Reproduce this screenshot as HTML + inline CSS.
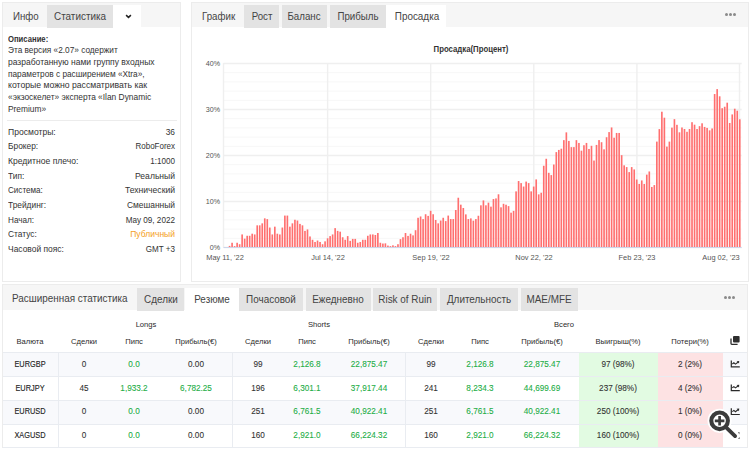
<!DOCTYPE html>
<html><head><meta charset="utf-8"><style>
html,body{margin:0;padding:0;background:#fff;width:750px;height:450px;overflow:hidden;position:relative;font-family:"Liberation Sans", sans-serif;}
body>div,body>svg{position:absolute;}
.t{white-space:nowrap;}
</style></head><body>
<div style="left:2px;top:2px;width:179px;height:280px;border:1px solid #ececec;box-sizing:border-box;background:#fff"></div>
<div style="left:3px;top:3px;width:177px;height:24.4px;background:#f6f6f6"></div>
<div style="left:47px;top:5px;width:66px;height:23px;background:#e3e3e3"></div>
<div style="left:113px;top:5px;width:28px;height:23px;background:#fff"></div>
<div class="t" style="top:11.84px;font-size:10px;line-height:10px;color:#444;left:13px;transform:scaleX(0.97);transform-origin:left 50%;">Инфо</div>
<div class="t" style="top:11.84px;font-size:10px;line-height:10px;color:#444;left:54px;transform:scaleX(0.99);transform-origin:left 50%;">Статистика</div>
<svg style="left:124.5px;top:14.3px" width="7" height="5" viewBox="0 0 7 5"><path d="M1.1 1.1 L3.5 3.4 L5.9 1.1" fill="none" stroke="#222" stroke-width="1.5"/></svg>
<div class="t" style="top:34.55px;font-size:8.8px;line-height:8.8px;color:#333;font-weight:bold;left:8.4px;transform:scaleX(0.874);transform-origin:left 50%;">Описание:</div>
<div class="t" style="top:46.05px;font-size:8.8px;line-height:8.8px;color:#333;left:8.4px;transform:scaleX(0.94);transform-origin:left 50%;">Эта версия «2.07» содержит</div>
<div class="t" style="top:57.85px;font-size:8.8px;line-height:8.8px;color:#333;left:8.4px;transform:scaleX(0.967);transform-origin:left 50%;">разработанную нами группу входных</div>
<div class="t" style="top:69.65px;font-size:8.8px;line-height:8.8px;color:#333;left:8.4px;transform:scaleX(0.94);transform-origin:left 50%;">параметров с расширением «Xtra»,</div>
<div class="t" style="top:81.45px;font-size:8.8px;line-height:8.8px;color:#333;left:8.4px;transform:scaleX(0.985);transform-origin:left 50%;">которые можно рассматривать как</div>
<div class="t" style="top:93.25px;font-size:8.8px;line-height:8.8px;color:#333;left:8.4px;transform:scaleX(0.952);transform-origin:left 50%;">«экзоскелет» эксперта «Ilan Dynamic</div>
<div class="t" style="top:105.05px;font-size:8.8px;line-height:8.8px;color:#333;left:8.4px;transform:scaleX(0.95);transform-origin:left 50%;">Premium»</div>
<div style="left:7px;top:120px;width:170px;height:1px;background:#ececec"></div>
<div class="t" style="top:127.75px;font-size:8.8px;line-height:8.8px;color:#333;left:8.1px;transform:scaleX(0.975);transform-origin:left 50%;">Просмотры:</div>
<div class="t" style="top:127.75px;font-size:8.8px;line-height:8.8px;color:#333;left:-125.20px;width:300px;text-align:right;transform:scaleX(0.95);transform-origin:right 50%;">36</div>
<div class="t" style="top:142.42px;font-size:8.8px;line-height:8.8px;color:#333;left:8.1px;transform:scaleX(0.95);transform-origin:left 50%;">Брокер:</div>
<div class="t" style="top:142.42px;font-size:8.8px;line-height:8.8px;color:#333;left:-125.20px;width:300px;text-align:right;transform:scaleX(0.908);transform-origin:right 50%;">RoboForex</div>
<div class="t" style="top:157.09px;font-size:8.8px;line-height:8.8px;color:#333;left:8.1px;transform:scaleX(0.973);transform-origin:left 50%;">Кредитное плечо:</div>
<div class="t" style="top:157.09px;font-size:8.8px;line-height:8.8px;color:#333;left:-125.20px;width:300px;text-align:right;transform:scaleX(0.92);transform-origin:right 50%;">1:1000</div>
<div class="t" style="top:171.76px;font-size:8.8px;line-height:8.8px;color:#333;left:8.1px;transform:scaleX(0.95);transform-origin:left 50%;">Тип:</div>
<div class="t" style="top:171.76px;font-size:8.8px;line-height:8.8px;color:#333;left:-125.20px;width:300px;text-align:right;transform:scaleX(0.973);transform-origin:right 50%;">Реальный</div>
<div class="t" style="top:186.43px;font-size:8.8px;line-height:8.8px;color:#333;left:8.1px;transform:scaleX(0.92);transform-origin:left 50%;">Система:</div>
<div class="t" style="top:186.43px;font-size:8.8px;line-height:8.8px;color:#333;left:-125.20px;width:300px;text-align:right;transform:scaleX(0.976);transform-origin:right 50%;">Технический</div>
<div class="t" style="top:201.10px;font-size:8.8px;line-height:8.8px;color:#333;left:8.1px;transform:scaleX(0.95);transform-origin:left 50%;">Трейдинг:</div>
<div class="t" style="top:201.10px;font-size:8.8px;line-height:8.8px;color:#333;left:-125.20px;width:300px;text-align:right;transform:scaleX(0.957);transform-origin:right 50%;">Смешанный</div>
<div class="t" style="top:215.77px;font-size:8.8px;line-height:8.8px;color:#333;left:8.1px;transform:scaleX(0.93);transform-origin:left 50%;">Начал:</div>
<div class="t" style="top:215.77px;font-size:8.8px;line-height:8.8px;color:#333;left:-125.20px;width:300px;text-align:right;transform:scaleX(0.926);transform-origin:right 50%;">May 09, 2022</div>
<div class="t" style="top:230.44px;font-size:8.8px;line-height:8.8px;color:#333;left:8.1px;transform:scaleX(0.95);transform-origin:left 50%;">Статус:</div>
<div class="t" style="top:230.44px;font-size:8.8px;line-height:8.8px;color:#f4a01c;left:-125.20px;width:300px;text-align:right;transform:scaleX(0.969);transform-origin:right 50%;">Публичный</div>
<div class="t" style="top:245.11px;font-size:8.8px;line-height:8.8px;color:#333;left:8.1px;transform:scaleX(0.96);transform-origin:left 50%;">Часовой пояс:</div>
<div class="t" style="top:245.11px;font-size:8.8px;line-height:8.8px;color:#333;left:-125.20px;width:300px;text-align:right;transform:scaleX(0.92);transform-origin:right 50%;">GMT +3</div>
<div style="left:191px;top:2px;width:558px;height:280px;border:1px solid #ececec;box-sizing:border-box;background:#fff"></div>
<div style="left:192px;top:3px;width:556px;height:24.4px;background:#f6f6f6"></div>
<div class="t" style="top:11.84px;font-size:10px;line-height:10px;color:#444;left:202px;transform:scaleX(0.97);transform-origin:left 50%;">График</div>
<div style="left:244px;top:5px;width:35px;height:23px;background:#e3e3e3"></div>
<div class="t" style="top:11.84px;font-size:10px;line-height:10px;color:#444;left:111.50px;width:300px;text-align:center;transform:scaleX(0.97);transform-origin:center 50%;">Рост</div>
<div style="left:281.5px;top:5px;width:45.1px;height:23px;background:#e3e3e3"></div>
<div class="t" style="top:11.84px;font-size:10px;line-height:10px;color:#444;left:154.05px;width:300px;text-align:center;transform:scaleX(0.97);transform-origin:center 50%;">Баланс</div>
<div style="left:329.7px;top:5px;width:56.3px;height:23px;background:#e3e3e3"></div>
<div class="t" style="top:11.84px;font-size:10px;line-height:10px;color:#444;left:207.85px;width:300px;text-align:center;transform:scaleX(0.97);transform-origin:center 50%;">Прибыль</div>
<div style="left:386px;top:5px;width:60px;height:23px;background:#fff"></div>
<div class="t" style="top:11.84px;font-size:10px;line-height:10px;color:#444;left:266.50px;width:300px;text-align:center;transform:scaleX(0.99);transform-origin:center 50%;">Просадка</div>
<div style="left:725.0px;top:13.2px;width:3px;height:3px;border-radius:50%;background:#8a8a8a"></div>
<div style="left:729.0px;top:13.2px;width:3px;height:3px;border-radius:50%;background:#8a8a8a"></div>
<div style="left:733.0px;top:13.2px;width:3px;height:3px;border-radius:50%;background:#8a8a8a"></div>
<svg style="left:0;top:0" width="750" height="450" viewBox="0 0 750 450"><line x1="223.5" y1="247.5" x2="741.7" y2="247.5" stroke="#efefef" stroke-width="1.3"/><line x1="223.5" y1="238.3" x2="741.7" y2="238.3" stroke="#f7f7f7" stroke-width="1"/><line x1="223.5" y1="229.1" x2="741.7" y2="229.1" stroke="#f7f7f7" stroke-width="1"/><line x1="223.5" y1="219.9" x2="741.7" y2="219.9" stroke="#f7f7f7" stroke-width="1"/><line x1="223.5" y1="210.7" x2="741.7" y2="210.7" stroke="#f7f7f7" stroke-width="1"/><line x1="223.5" y1="201.5" x2="741.7" y2="201.5" stroke="#efefef" stroke-width="1.3"/><line x1="223.5" y1="192.3" x2="741.7" y2="192.3" stroke="#f7f7f7" stroke-width="1"/><line x1="223.5" y1="183.1" x2="741.7" y2="183.1" stroke="#f7f7f7" stroke-width="1"/><line x1="223.5" y1="173.9" x2="741.7" y2="173.9" stroke="#f7f7f7" stroke-width="1"/><line x1="223.5" y1="164.7" x2="741.7" y2="164.7" stroke="#f7f7f7" stroke-width="1"/><line x1="223.5" y1="155.5" x2="741.7" y2="155.5" stroke="#efefef" stroke-width="1.3"/><line x1="223.5" y1="146.3" x2="741.7" y2="146.3" stroke="#f7f7f7" stroke-width="1"/><line x1="223.5" y1="137.1" x2="741.7" y2="137.1" stroke="#f7f7f7" stroke-width="1"/><line x1="223.5" y1="127.9" x2="741.7" y2="127.9" stroke="#f7f7f7" stroke-width="1"/><line x1="223.5" y1="118.69999999999999" x2="741.7" y2="118.69999999999999" stroke="#f7f7f7" stroke-width="1"/><line x1="223.5" y1="109.5" x2="741.7" y2="109.5" stroke="#efefef" stroke-width="1.3"/><line x1="223.5" y1="100.30000000000001" x2="741.7" y2="100.30000000000001" stroke="#f7f7f7" stroke-width="1"/><line x1="223.5" y1="91.1" x2="741.7" y2="91.1" stroke="#f7f7f7" stroke-width="1"/><line x1="223.5" y1="81.9" x2="741.7" y2="81.9" stroke="#f7f7f7" stroke-width="1"/><line x1="223.5" y1="72.69999999999999" x2="741.7" y2="72.69999999999999" stroke="#f7f7f7" stroke-width="1"/><line x1="223.5" y1="63.5" x2="741.7" y2="63.5" stroke="#efefef" stroke-width="1.3"/><line x1="223.5" y1="63" x2="223.5" y2="247.5" stroke="#efefef" stroke-width="1.4"/><line x1="327.6" y1="63" x2="327.6" y2="247.5" stroke="#efefef" stroke-width="1.4"/><line x1="430.7" y1="63" x2="430.7" y2="247.5" stroke="#efefef" stroke-width="1.4"/><line x1="533.8" y1="63" x2="533.8" y2="247.5" stroke="#efefef" stroke-width="1.4"/><line x1="636.9" y1="63" x2="636.9" y2="247.5" stroke="#efefef" stroke-width="1.4"/><line x1="739.5" y1="63" x2="739.5" y2="247.5" stroke="#efefef" stroke-width="1.4"/><rect x="228.76" y="245.89" width="1.64" height="1.61" fill="#ff6f6f"/><rect x="231.27" y="242.76" width="1.64" height="4.74" fill="#ff6f6f"/><rect x="233.78" y="246.12" width="1.64" height="1.38" fill="#ff6f6f"/><rect x="236.30" y="242.76" width="1.64" height="4.74" fill="#ff6f6f"/><rect x="238.81" y="244.23" width="1.64" height="3.27" fill="#ff6f6f"/><rect x="241.32" y="234.44" width="1.64" height="13.06" fill="#ff6f6f"/><rect x="243.84" y="238.67" width="1.64" height="8.83" fill="#ff6f6f"/><rect x="246.35" y="235.77" width="1.64" height="11.73" fill="#ff6f6f"/><rect x="248.86" y="235.77" width="1.64" height="11.73" fill="#ff6f6f"/><rect x="251.38" y="233.70" width="1.64" height="13.80" fill="#ff6f6f"/><rect x="253.89" y="234.44" width="1.64" height="13.06" fill="#ff6f6f"/><rect x="256.40" y="225.33" width="1.64" height="22.17" fill="#ff6f6f"/><rect x="258.92" y="225.33" width="1.64" height="22.17" fill="#ff6f6f"/><rect x="261.43" y="223.35" width="1.64" height="24.15" fill="#ff6f6f"/><rect x="263.94" y="218.34" width="1.64" height="29.16" fill="#ff6f6f"/><rect x="266.46" y="219.12" width="1.64" height="28.38" fill="#ff6f6f"/><rect x="268.97" y="227.54" width="1.64" height="19.96" fill="#ff6f6f"/><rect x="271.48" y="234.44" width="1.64" height="13.06" fill="#ff6f6f"/><rect x="274.00" y="226.66" width="1.64" height="20.84" fill="#ff6f6f"/><rect x="276.51" y="233.70" width="1.64" height="13.80" fill="#ff6f6f"/><rect x="279.02" y="234.44" width="1.64" height="13.06" fill="#ff6f6f"/><rect x="281.54" y="227.54" width="1.64" height="19.96" fill="#ff6f6f"/><rect x="284.05" y="215.58" width="1.64" height="31.92" fill="#ff6f6f"/><rect x="286.56" y="215.58" width="1.64" height="31.92" fill="#ff6f6f"/><rect x="289.08" y="226.66" width="1.64" height="20.84" fill="#ff6f6f"/><rect x="291.59" y="223.35" width="1.64" height="24.15" fill="#ff6f6f"/><rect x="294.10" y="219.76" width="1.64" height="27.74" fill="#ff6f6f"/><rect x="296.62" y="220.54" width="1.64" height="26.96" fill="#ff6f6f"/><rect x="299.13" y="223.90" width="1.64" height="23.60" fill="#ff6f6f"/><rect x="301.64" y="225.33" width="1.64" height="22.17" fill="#ff6f6f"/><rect x="304.16" y="230.89" width="1.64" height="16.61" fill="#ff6f6f"/><rect x="306.67" y="229.42" width="1.64" height="18.08" fill="#ff6f6f"/><rect x="309.18" y="236.46" width="1.64" height="11.04" fill="#ff6f6f"/><rect x="311.70" y="239.77" width="1.64" height="7.73" fill="#ff6f6f"/><rect x="314.21" y="241.98" width="1.64" height="5.52" fill="#ff6f6f"/><rect x="316.72" y="240.55" width="1.64" height="6.95" fill="#ff6f6f"/><rect x="319.24" y="241.98" width="1.64" height="5.52" fill="#ff6f6f"/><rect x="321.75" y="244.23" width="1.64" height="3.27" fill="#ff6f6f"/><rect x="324.26" y="241.34" width="1.64" height="6.16" fill="#ff6f6f"/><rect x="326.78" y="238.30" width="1.64" height="9.20" fill="#ff6f6f"/><rect x="329.29" y="236.09" width="1.64" height="11.41" fill="#ff6f6f"/><rect x="331.80" y="234.44" width="1.64" height="13.06" fill="#ff6f6f"/><rect x="334.32" y="228.13" width="1.64" height="19.37" fill="#ff6f6f"/><rect x="336.83" y="230.89" width="1.64" height="16.61" fill="#ff6f6f"/><rect x="339.34" y="231.68" width="1.64" height="15.82" fill="#ff6f6f"/><rect x="341.86" y="237.24" width="1.64" height="10.26" fill="#ff6f6f"/><rect x="344.37" y="239.77" width="1.64" height="7.73" fill="#ff6f6f"/><rect x="346.88" y="236.09" width="1.64" height="11.41" fill="#ff6f6f"/><rect x="349.40" y="240.88" width="1.64" height="6.62" fill="#ff6f6f"/><rect x="351.91" y="238.90" width="1.64" height="8.60" fill="#ff6f6f"/><rect x="354.42" y="238.90" width="1.64" height="8.60" fill="#ff6f6f"/><rect x="356.93" y="242.76" width="1.64" height="4.74" fill="#ff6f6f"/><rect x="359.45" y="241.98" width="1.64" height="5.52" fill="#ff6f6f"/><rect x="361.96" y="239.77" width="1.64" height="7.73" fill="#ff6f6f"/><rect x="364.47" y="239.77" width="1.64" height="7.73" fill="#ff6f6f"/><rect x="366.99" y="235.77" width="1.64" height="11.73" fill="#ff6f6f"/><rect x="369.50" y="234.44" width="1.64" height="13.06" fill="#ff6f6f"/><rect x="372.01" y="234.44" width="1.64" height="13.06" fill="#ff6f6f"/><rect x="374.53" y="234.99" width="1.64" height="12.51" fill="#ff6f6f"/><rect x="377.04" y="233.01" width="1.64" height="14.49" fill="#ff6f6f"/><rect x="379.55" y="242.76" width="1.64" height="4.74" fill="#ff6f6f"/><rect x="382.07" y="243.54" width="1.64" height="3.96" fill="#ff6f6f"/><rect x="384.58" y="243.36" width="1.64" height="4.14" fill="#ff6f6f"/><rect x="387.09" y="245.57" width="1.64" height="1.93" fill="#ff6f6f"/><rect x="389.61" y="246.12" width="1.64" height="1.38" fill="#ff6f6f"/><rect x="392.12" y="245.34" width="1.64" height="2.16" fill="#ff6f6f"/><rect x="394.63" y="246.12" width="1.64" height="1.38" fill="#ff6f6f"/><rect x="397.15" y="244.23" width="1.64" height="3.27" fill="#ff6f6f"/><rect x="399.66" y="239.13" width="1.64" height="8.37" fill="#ff6f6f"/><rect x="402.17" y="237.24" width="1.64" height="10.26" fill="#ff6f6f"/><rect x="404.69" y="233.01" width="1.64" height="14.49" fill="#ff6f6f"/><rect x="407.20" y="235.91" width="1.64" height="11.59" fill="#ff6f6f"/><rect x="409.71" y="233.70" width="1.64" height="13.80" fill="#ff6f6f"/><rect x="412.23" y="235.36" width="1.64" height="12.14" fill="#ff6f6f"/><rect x="414.74" y="230.20" width="1.64" height="17.30" fill="#ff6f6f"/><rect x="417.25" y="217.78" width="1.64" height="29.72" fill="#ff6f6f"/><rect x="419.77" y="216.45" width="1.64" height="31.05" fill="#ff6f6f"/><rect x="422.28" y="219.12" width="1.64" height="28.38" fill="#ff6f6f"/><rect x="424.79" y="214.24" width="1.64" height="33.26" fill="#ff6f6f"/><rect x="427.31" y="215.90" width="1.64" height="31.60" fill="#ff6f6f"/><rect x="429.82" y="210.79" width="1.64" height="36.71" fill="#ff6f6f"/><rect x="432.33" y="214.24" width="1.64" height="33.26" fill="#ff6f6f"/><rect x="434.85" y="219.99" width="1.64" height="27.51" fill="#ff6f6f"/><rect x="437.36" y="223.35" width="1.64" height="24.15" fill="#ff6f6f"/><rect x="439.87" y="220.54" width="1.64" height="26.96" fill="#ff6f6f"/><rect x="442.39" y="217.78" width="1.64" height="29.72" fill="#ff6f6f"/><rect x="444.90" y="221.10" width="1.64" height="26.40" fill="#ff6f6f"/><rect x="447.41" y="215.58" width="1.64" height="31.92" fill="#ff6f6f"/><rect x="449.93" y="219.07" width="1.64" height="28.43" fill="#ff6f6f"/><rect x="452.44" y="219.07" width="1.64" height="28.43" fill="#ff6f6f"/><rect x="454.95" y="210.01" width="1.64" height="37.49" fill="#ff6f6f"/><rect x="457.47" y="197.73" width="1.64" height="49.77" fill="#ff6f6f"/><rect x="459.98" y="204.67" width="1.64" height="42.83" fill="#ff6f6f"/><rect x="462.49" y="207.99" width="1.64" height="39.51" fill="#ff6f6f"/><rect x="465.01" y="214.38" width="1.64" height="33.12" fill="#ff6f6f"/><rect x="467.52" y="219.07" width="1.64" height="28.43" fill="#ff6f6f"/><rect x="470.03" y="218.38" width="1.64" height="29.12" fill="#ff6f6f"/><rect x="472.55" y="220.68" width="1.64" height="26.82" fill="#ff6f6f"/><rect x="475.06" y="219.07" width="1.64" height="28.43" fill="#ff6f6f"/><rect x="477.57" y="215.76" width="1.64" height="31.74" fill="#ff6f6f"/><rect x="480.09" y="205.32" width="1.64" height="42.18" fill="#ff6f6f"/><rect x="482.60" y="200.40" width="1.64" height="47.10" fill="#ff6f6f"/><rect x="485.11" y="205.32" width="1.64" height="42.18" fill="#ff6f6f"/><rect x="487.63" y="202.65" width="1.64" height="44.85" fill="#ff6f6f"/><rect x="490.14" y="206.65" width="1.64" height="40.85" fill="#ff6f6f"/><rect x="492.65" y="199.06" width="1.64" height="48.44" fill="#ff6f6f"/><rect x="495.17" y="198.42" width="1.64" height="49.08" fill="#ff6f6f"/><rect x="497.68" y="194.28" width="1.64" height="53.22" fill="#ff6f6f"/><rect x="500.19" y="207.34" width="1.64" height="40.16" fill="#ff6f6f"/><rect x="502.71" y="203.80" width="1.64" height="43.70" fill="#ff6f6f"/><rect x="505.22" y="204.72" width="1.64" height="42.78" fill="#ff6f6f"/><rect x="507.73" y="206.10" width="1.64" height="41.40" fill="#ff6f6f"/><rect x="510.25" y="212.68" width="1.64" height="34.82" fill="#ff6f6f"/><rect x="512.76" y="210.88" width="1.64" height="36.62" fill="#ff6f6f"/><rect x="515.27" y="191.38" width="1.64" height="56.12" fill="#ff6f6f"/><rect x="517.79" y="181.03" width="1.64" height="66.47" fill="#ff6f6f"/><rect x="520.30" y="183.10" width="1.64" height="64.40" fill="#ff6f6f"/><rect x="522.81" y="186.55" width="1.64" height="60.95" fill="#ff6f6f"/><rect x="525.33" y="181.58" width="1.64" height="65.92" fill="#ff6f6f"/><rect x="527.84" y="183.10" width="1.64" height="64.40" fill="#ff6f6f"/><rect x="530.35" y="191.38" width="1.64" height="56.12" fill="#ff6f6f"/><rect x="532.87" y="186.55" width="1.64" height="60.95" fill="#ff6f6f"/><rect x="535.38" y="179.42" width="1.64" height="68.08" fill="#ff6f6f"/><rect x="537.89" y="194.37" width="1.64" height="53.13" fill="#ff6f6f"/><rect x="540.41" y="192.76" width="1.64" height="54.74" fill="#ff6f6f"/><rect x="542.92" y="165.76" width="1.64" height="81.74" fill="#ff6f6f"/><rect x="545.43" y="158.77" width="1.64" height="88.73" fill="#ff6f6f"/><rect x="547.95" y="172.80" width="1.64" height="74.70" fill="#ff6f6f"/><rect x="550.46" y="175.10" width="1.64" height="72.40" fill="#ff6f6f"/><rect x="552.97" y="164.52" width="1.64" height="82.98" fill="#ff6f6f"/><rect x="555.49" y="152.10" width="1.64" height="95.40" fill="#ff6f6f"/><rect x="558.00" y="149.93" width="1.64" height="97.57" fill="#ff6f6f"/><rect x="560.51" y="148.69" width="1.64" height="98.81" fill="#ff6f6f"/><rect x="563.03" y="140.14" width="1.64" height="107.36" fill="#ff6f6f"/><rect x="565.54" y="132.36" width="1.64" height="115.14" fill="#ff6f6f"/><rect x="568.05" y="140.92" width="1.64" height="106.58" fill="#ff6f6f"/><rect x="570.57" y="147.13" width="1.64" height="100.37" fill="#ff6f6f"/><rect x="573.08" y="147.13" width="1.64" height="100.37" fill="#ff6f6f"/><rect x="575.59" y="140.14" width="1.64" height="107.36" fill="#ff6f6f"/><rect x="578.11" y="142.94" width="1.64" height="104.56" fill="#ff6f6f"/><rect x="580.62" y="150.67" width="1.64" height="96.83" fill="#ff6f6f"/><rect x="583.13" y="145.24" width="1.64" height="102.26" fill="#ff6f6f"/><rect x="585.65" y="142.94" width="1.64" height="104.56" fill="#ff6f6f"/><rect x="588.16" y="148.97" width="1.64" height="98.53" fill="#ff6f6f"/><rect x="590.67" y="145.79" width="1.64" height="101.71" fill="#ff6f6f"/><rect x="593.19" y="160.56" width="1.64" height="86.94" fill="#ff6f6f"/><rect x="595.70" y="144.92" width="1.64" height="102.58" fill="#ff6f6f"/><rect x="598.21" y="140.09" width="1.64" height="107.41" fill="#ff6f6f"/><rect x="600.73" y="142.21" width="1.64" height="105.29" fill="#ff6f6f"/><rect x="603.24" y="149.34" width="1.64" height="98.16" fill="#ff6f6f"/><rect x="605.75" y="137.24" width="1.64" height="110.26" fill="#ff6f6f"/><rect x="608.26" y="132.09" width="1.64" height="115.41" fill="#ff6f6f"/><rect x="610.78" y="127.44" width="1.64" height="120.06" fill="#ff6f6f"/><rect x="613.29" y="137.74" width="1.64" height="109.76" fill="#ff6f6f"/><rect x="615.80" y="132.96" width="1.64" height="114.54" fill="#ff6f6f"/><rect x="618.32" y="132.96" width="1.64" height="114.54" fill="#ff6f6f"/><rect x="620.83" y="155.18" width="1.64" height="92.32" fill="#ff6f6f"/><rect x="623.34" y="165.34" width="1.64" height="82.16" fill="#ff6f6f"/><rect x="625.86" y="167.09" width="1.64" height="80.41" fill="#ff6f6f"/><rect x="628.37" y="172.11" width="1.64" height="75.39" fill="#ff6f6f"/><rect x="630.88" y="167.09" width="1.64" height="80.41" fill="#ff6f6f"/><rect x="633.40" y="169.44" width="1.64" height="78.06" fill="#ff6f6f"/><rect x="635.91" y="179.51" width="1.64" height="67.99" fill="#ff6f6f"/><rect x="638.42" y="183.97" width="1.64" height="63.53" fill="#ff6f6f"/><rect x="640.94" y="180.43" width="1.64" height="67.07" fill="#ff6f6f"/><rect x="643.45" y="183.97" width="1.64" height="63.53" fill="#ff6f6f"/><rect x="645.96" y="174.64" width="1.64" height="72.86" fill="#ff6f6f"/><rect x="648.48" y="171.46" width="1.64" height="76.04" fill="#ff6f6f"/><rect x="650.99" y="186.96" width="1.64" height="60.54" fill="#ff6f6f"/><rect x="653.50" y="185.08" width="1.64" height="62.42" fill="#ff6f6f"/><rect x="656.02" y="141.61" width="1.64" height="105.89" fill="#ff6f6f"/><rect x="658.53" y="129.10" width="1.64" height="118.40" fill="#ff6f6f"/><rect x="661.04" y="111.71" width="1.64" height="135.79" fill="#ff6f6f"/><rect x="663.56" y="117.69" width="1.64" height="129.81" fill="#ff6f6f"/><rect x="666.07" y="146.62" width="1.64" height="100.88" fill="#ff6f6f"/><rect x="668.58" y="141.61" width="1.64" height="105.89" fill="#ff6f6f"/><rect x="671.10" y="127.62" width="1.64" height="119.88" fill="#ff6f6f"/><rect x="673.61" y="119.16" width="1.64" height="128.34" fill="#ff6f6f"/><rect x="676.12" y="124.82" width="1.64" height="122.68" fill="#ff6f6f"/><rect x="678.64" y="132.32" width="1.64" height="115.18" fill="#ff6f6f"/><rect x="681.15" y="127.49" width="1.64" height="120.01" fill="#ff6f6f"/><rect x="683.66" y="129.00" width="1.64" height="118.50" fill="#ff6f6f"/><rect x="686.18" y="131.81" width="1.64" height="115.69" fill="#ff6f6f"/><rect x="688.69" y="129.00" width="1.64" height="118.50" fill="#ff6f6f"/><rect x="691.20" y="122.20" width="1.64" height="125.30" fill="#ff6f6f"/><rect x="693.72" y="124.68" width="1.64" height="122.82" fill="#ff6f6f"/><rect x="696.23" y="129.00" width="1.64" height="118.50" fill="#ff6f6f"/><rect x="698.74" y="126.15" width="1.64" height="121.35" fill="#ff6f6f"/><rect x="701.26" y="123.30" width="1.64" height="124.20" fill="#ff6f6f"/><rect x="703.77" y="126.93" width="1.64" height="120.57" fill="#ff6f6f"/><rect x="706.28" y="127.90" width="1.64" height="119.60" fill="#ff6f6f"/><rect x="708.80" y="130.34" width="1.64" height="117.16" fill="#ff6f6f"/><rect x="711.31" y="128.45" width="1.64" height="119.05" fill="#ff6f6f"/><rect x="713.82" y="94.04" width="1.64" height="153.46" fill="#ff6f6f"/><rect x="716.34" y="89.12" width="1.64" height="158.38" fill="#ff6f6f"/><rect x="718.85" y="96.30" width="1.64" height="151.20" fill="#ff6f6f"/><rect x="721.36" y="108.21" width="1.64" height="139.29" fill="#ff6f6f"/><rect x="723.88" y="106.74" width="1.64" height="140.76" fill="#ff6f6f"/><rect x="726.39" y="102.69" width="1.64" height="144.81" fill="#ff6f6f"/><rect x="728.90" y="122.98" width="1.64" height="124.52" fill="#ff6f6f"/><rect x="731.42" y="114.42" width="1.64" height="133.08" fill="#ff6f6f"/><rect x="733.93" y="108.72" width="1.64" height="138.78" fill="#ff6f6f"/><rect x="736.44" y="110.70" width="1.64" height="136.80" fill="#ff6f6f"/><rect x="738.96" y="119.30" width="1.64" height="128.20" fill="#ff6f6f"/><line x1="223.5" y1="247.5" x2="741.7" y2="247.5" stroke="#ccd6eb" stroke-width="1"/></svg>
<div class="t" style="top:44.69px;font-size:8.4px;line-height:8.4px;color:#333;font-weight:bold;left:320.50px;width:300px;text-align:center;transform:scaleX(0.93);transform-origin:center 50%;">Просадка(Процент)</div>
<div class="t" style="top:243.78px;font-size:7.7px;line-height:7.7px;color:#555;left:-80.00px;width:300px;text-align:right;transform:scaleX(0.93);transform-origin:right 50%;">0%</div>
<div class="t" style="top:197.78px;font-size:7.7px;line-height:7.7px;color:#555;left:-80.00px;width:300px;text-align:right;transform:scaleX(0.93);transform-origin:right 50%;">10%</div>
<div class="t" style="top:151.78px;font-size:7.7px;line-height:7.7px;color:#555;left:-80.00px;width:300px;text-align:right;transform:scaleX(0.93);transform-origin:right 50%;">20%</div>
<div class="t" style="top:105.78px;font-size:7.7px;line-height:7.7px;color:#555;left:-80.00px;width:300px;text-align:right;transform:scaleX(0.93);transform-origin:right 50%;">30%</div>
<div class="t" style="top:59.78px;font-size:7.7px;line-height:7.7px;color:#555;left:-80.00px;width:300px;text-align:right;transform:scaleX(0.93);transform-origin:right 50%;">40%</div>
<div class="t" style="top:254.41px;font-size:7.9px;line-height:7.9px;color:#555;left:75.00px;width:300px;text-align:center;transform:scaleX(0.94);transform-origin:center 50%;">May 11, &#39;22</div>
<div class="t" style="top:254.41px;font-size:7.9px;line-height:7.9px;color:#555;left:177.70px;width:300px;text-align:center;transform:scaleX(0.94);transform-origin:center 50%;">Jul 14, &#39;22</div>
<div class="t" style="top:254.41px;font-size:7.9px;line-height:7.9px;color:#555;left:281.00px;width:300px;text-align:center;transform:scaleX(0.94);transform-origin:center 50%;">Sep 19, &#39;22</div>
<div class="t" style="top:254.41px;font-size:7.9px;line-height:7.9px;color:#555;left:383.70px;width:300px;text-align:center;transform:scaleX(0.94);transform-origin:center 50%;">Nov 22, &#39;22</div>
<div class="t" style="top:254.41px;font-size:7.9px;line-height:7.9px;color:#555;left:486.70px;width:300px;text-align:center;transform:scaleX(0.94);transform-origin:center 50%;">Feb 23, &#39;23</div>
<div class="t" style="top:254.41px;font-size:7.9px;line-height:7.9px;color:#555;left:571.30px;width:300px;text-align:center;transform:scaleX(0.94);transform-origin:center 50%;">Aug 02, &#39;23</div>
<div style="left:2px;top:284px;width:746px;height:164px;border:1px solid #ececec;box-sizing:border-box;background:#fff"></div>
<div style="left:3px;top:285px;width:744px;height:25px;background:#f6f6f6"></div>
<div class="t" style="top:294.44px;font-size:10px;line-height:10px;color:#444;left:12px;transform:scaleX(0.99);transform-origin:left 50%;">Расширенная статистика</div>
<div style="left:137px;top:288px;width:47.4px;height:22.7px;background:#e3e3e3"></div>
<div class="t" style="top:294.74px;font-size:10px;line-height:10px;color:#444;left:10.70px;width:300px;text-align:center;transform:scaleX(0.99);transform-origin:center 50%;">Сделки</div>
<div style="left:185.2px;top:288px;width:53.6px;height:22.7px;background:#fff"></div>
<div class="t" style="top:294.74px;font-size:10px;line-height:10px;color:#444;left:62.00px;width:300px;text-align:center;transform:scaleX(0.99);transform-origin:center 50%;">Резюме</div>
<div style="left:239px;top:288px;width:63.8px;height:22.7px;background:#e3e3e3"></div>
<div class="t" style="top:294.74px;font-size:10px;line-height:10px;color:#444;left:120.90px;width:300px;text-align:center;transform:scaleX(0.99);transform-origin:center 50%;">Почасовой</div>
<div style="left:305.5px;top:288px;width:65.0px;height:22.7px;background:#e3e3e3"></div>
<div class="t" style="top:294.74px;font-size:10px;line-height:10px;color:#444;left:188.00px;width:300px;text-align:center;transform:scaleX(0.99);transform-origin:center 50%;">Ежедневно</div>
<div style="left:372.7px;top:288px;width:64.5px;height:22.7px;background:#e3e3e3"></div>
<div class="t" style="top:294.74px;font-size:10px;line-height:10px;color:#444;left:254.95px;width:300px;text-align:center;transform:scaleX(0.99);transform-origin:center 50%;">Risk of Ruin</div>
<div style="left:439.6px;top:288px;width:78.7px;height:22.7px;background:#e3e3e3"></div>
<div class="t" style="top:294.74px;font-size:10px;line-height:10px;color:#444;left:328.95px;width:300px;text-align:center;transform:scaleX(0.99);transform-origin:center 50%;">Длительность</div>
<div style="left:520.7px;top:288px;width:57.3px;height:22.7px;background:#e3e3e3"></div>
<div class="t" style="top:294.74px;font-size:10px;line-height:10px;color:#444;left:399.35px;width:300px;text-align:center;transform:scaleX(0.99);transform-origin:center 50%;">MAE/MFE</div>
<div style="left:724.4px;top:295.8px;width:3px;height:3px;border-radius:50%;background:#8a8a8a"></div>
<div style="left:728.4px;top:295.8px;width:3px;height:3px;border-radius:50%;background:#8a8a8a"></div>
<div style="left:732.4px;top:295.8px;width:3px;height:3px;border-radius:50%;background:#8a8a8a"></div>
<div style="left:3px;top:352px;width:744px;height:95px;"></div>
<div style="left:3px;top:352px;width:744px;height:24px;background:#f8f9fc"></div>
<div style="left:3px;top:400px;width:744px;height:23.5px;background:#f8f9fc"></div>
<div style="left:578.7px;top:352px;width:79.3px;height:95px;background:#e2fbe2"></div>
<div style="left:658px;top:352px;width:65px;height:95px;background:#fde2e3"></div>
<div style="left:3px;top:352px;width:744px;height:1px;background:#e9ecf1"></div>
<div style="left:3px;top:376px;width:744px;height:1px;background:#e9ecf1"></div>
<div style="left:3px;top:400px;width:744px;height:1px;background:#e9ecf1"></div>
<div style="left:3px;top:423.5px;width:744px;height:1px;background:#e9ecf1"></div>
<div style="left:3px;top:447px;width:744px;height:1px;background:#e9ecf1"></div>
<div style="left:58px;top:352px;width:1px;height:95px;background:#e9ecf1"></div>
<div style="left:232px;top:352px;width:1px;height:95px;background:#e9ecf1"></div>
<div style="left:405px;top:352px;width:1px;height:95px;background:#e9ecf1"></div>
<div class="t" style="top:321.14px;font-size:8.1px;line-height:8.1px;color:#2a2a2a;left:-4.20px;width:300px;text-align:center;transform:scaleX(0.94);transform-origin:center 50%;">Longs</div>
<div class="t" style="top:321.14px;font-size:8.1px;line-height:8.1px;color:#2a2a2a;left:169.00px;width:300px;text-align:center;transform:scaleX(0.94);transform-origin:center 50%;">Shorts</div>
<div class="t" style="top:321.14px;font-size:8.1px;line-height:8.1px;color:#2a2a2a;left:414.20px;width:300px;text-align:center;transform:scaleX(0.94);transform-origin:center 50%;">Всего</div>
<div class="t" style="top:338.14px;font-size:8.1px;line-height:8.1px;color:#2a2a2a;left:-119.60px;width:300px;text-align:center;transform:scaleX(0.94);transform-origin:center 50%;">Валюта</div>
<div class="t" style="top:338.14px;font-size:8.1px;line-height:8.1px;color:#2a2a2a;left:-65.80px;width:300px;text-align:center;transform:scaleX(0.94);transform-origin:center 50%;">Сделки</div>
<div class="t" style="top:338.14px;font-size:8.1px;line-height:8.1px;color:#2a2a2a;left:-16.00px;width:300px;text-align:center;transform:scaleX(0.94);transform-origin:center 50%;">Пипс</div>
<div class="t" style="top:338.14px;font-size:8.1px;line-height:8.1px;color:#2a2a2a;left:45.60px;width:300px;text-align:center;transform:scaleX(0.94);transform-origin:center 50%;">Прибыль(€)</div>
<div class="t" style="top:338.14px;font-size:8.1px;line-height:8.1px;color:#2a2a2a;left:107.70px;width:300px;text-align:center;transform:scaleX(0.94);transform-origin:center 50%;">Сделки</div>
<div class="t" style="top:338.14px;font-size:8.1px;line-height:8.1px;color:#2a2a2a;left:157.40px;width:300px;text-align:center;transform:scaleX(0.94);transform-origin:center 50%;">Пипс</div>
<div class="t" style="top:338.14px;font-size:8.1px;line-height:8.1px;color:#2a2a2a;left:219.00px;width:300px;text-align:center;transform:scaleX(0.94);transform-origin:center 50%;">Прибыль(€)</div>
<div class="t" style="top:338.14px;font-size:8.1px;line-height:8.1px;color:#2a2a2a;left:280.50px;width:300px;text-align:center;transform:scaleX(0.94);transform-origin:center 50%;">Сделки</div>
<div class="t" style="top:338.14px;font-size:8.1px;line-height:8.1px;color:#2a2a2a;left:330.20px;width:300px;text-align:center;transform:scaleX(0.94);transform-origin:center 50%;">Пипс</div>
<div class="t" style="top:338.14px;font-size:8.1px;line-height:8.1px;color:#2a2a2a;left:391.80px;width:300px;text-align:center;transform:scaleX(0.94);transform-origin:center 50%;">Прибыль(€)</div>
<div class="t" style="top:338.14px;font-size:8.1px;line-height:8.1px;color:#2a2a2a;left:468.30px;width:300px;text-align:center;transform:scaleX(0.94);transform-origin:center 50%;">Выигрыш(%)</div>
<div class="t" style="top:338.14px;font-size:8.1px;line-height:8.1px;color:#2a2a2a;left:540.30px;width:300px;text-align:center;transform:scaleX(0.94);transform-origin:center 50%;">Потери(%)</div>
<div class="t" style="top:360.05px;font-size:8.8px;line-height:8.8px;color:#222;left:-119.60px;width:300px;text-align:center;transform:scaleX(0.84);transform-origin:center 50%;-webkit-text-stroke:0.12px #222;">EURGBP</div>
<div class="t" style="top:360.13px;font-size:9.3px;line-height:9.3px;color:#333;left:-65.80px;width:300px;text-align:center;transform:scaleX(0.88);transform-origin:center 50%;-webkit-text-stroke:0.1px #333;">0</div>
<div class="t" style="top:360.13px;font-size:9.3px;line-height:9.3px;color:#22ad45;left:-16.00px;width:300px;text-align:center;transform:scaleX(0.88);transform-origin:center 50%;-webkit-text-stroke:0.1px #22ad45;">0.0</div>
<div class="t" style="top:360.13px;font-size:9.3px;line-height:9.3px;color:#333;left:45.60px;width:300px;text-align:center;transform:scaleX(0.88);transform-origin:center 50%;-webkit-text-stroke:0.1px #333;">0.00</div>
<div class="t" style="top:360.13px;font-size:9.3px;line-height:9.3px;color:#333;left:107.70px;width:300px;text-align:center;transform:scaleX(0.88);transform-origin:center 50%;-webkit-text-stroke:0.1px #333;">99</div>
<div class="t" style="top:360.13px;font-size:9.3px;line-height:9.3px;color:#22ad45;left:157.40px;width:300px;text-align:center;transform:scaleX(0.88);transform-origin:center 50%;-webkit-text-stroke:0.1px #22ad45;">2,126.8</div>
<div class="t" style="top:360.13px;font-size:9.3px;line-height:9.3px;color:#22ad45;left:219.00px;width:300px;text-align:center;transform:scaleX(0.88);transform-origin:center 50%;-webkit-text-stroke:0.1px #22ad45;">22,875.47</div>
<div class="t" style="top:360.13px;font-size:9.3px;line-height:9.3px;color:#333;left:280.50px;width:300px;text-align:center;transform:scaleX(0.88);transform-origin:center 50%;-webkit-text-stroke:0.1px #333;">99</div>
<div class="t" style="top:360.13px;font-size:9.3px;line-height:9.3px;color:#22ad45;left:330.20px;width:300px;text-align:center;transform:scaleX(0.88);transform-origin:center 50%;-webkit-text-stroke:0.1px #22ad45;">2,126.8</div>
<div class="t" style="top:360.13px;font-size:9.3px;line-height:9.3px;color:#22ad45;left:391.80px;width:300px;text-align:center;transform:scaleX(0.88);transform-origin:center 50%;-webkit-text-stroke:0.1px #22ad45;">22,875.47</div>
<div class="t" style="top:360.13px;font-size:9.3px;line-height:9.3px;color:#333;left:468.30px;width:300px;text-align:center;transform:scaleX(0.88);transform-origin:center 50%;-webkit-text-stroke:0.1px #333;">97 (98%)</div>
<div class="t" style="top:360.13px;font-size:9.3px;line-height:9.3px;color:#333;left:540.30px;width:300px;text-align:center;transform:scaleX(0.88);transform-origin:center 50%;-webkit-text-stroke:0.1px #333;">2 (2%)</div>
<div class="t" style="top:383.85px;font-size:8.8px;line-height:8.8px;color:#222;left:-119.60px;width:300px;text-align:center;transform:scaleX(0.84);transform-origin:center 50%;-webkit-text-stroke:0.12px #222;">EURJPY</div>
<div class="t" style="top:383.93px;font-size:9.3px;line-height:9.3px;color:#333;left:-65.80px;width:300px;text-align:center;transform:scaleX(0.88);transform-origin:center 50%;-webkit-text-stroke:0.1px #333;">45</div>
<div class="t" style="top:383.93px;font-size:9.3px;line-height:9.3px;color:#22ad45;left:-16.00px;width:300px;text-align:center;transform:scaleX(0.88);transform-origin:center 50%;-webkit-text-stroke:0.1px #22ad45;">1,933.2</div>
<div class="t" style="top:383.93px;font-size:9.3px;line-height:9.3px;color:#22ad45;left:45.60px;width:300px;text-align:center;transform:scaleX(0.88);transform-origin:center 50%;-webkit-text-stroke:0.1px #22ad45;">6,782.25</div>
<div class="t" style="top:383.93px;font-size:9.3px;line-height:9.3px;color:#333;left:107.70px;width:300px;text-align:center;transform:scaleX(0.88);transform-origin:center 50%;-webkit-text-stroke:0.1px #333;">196</div>
<div class="t" style="top:383.93px;font-size:9.3px;line-height:9.3px;color:#22ad45;left:157.40px;width:300px;text-align:center;transform:scaleX(0.88);transform-origin:center 50%;-webkit-text-stroke:0.1px #22ad45;">6,301.1</div>
<div class="t" style="top:383.93px;font-size:9.3px;line-height:9.3px;color:#22ad45;left:219.00px;width:300px;text-align:center;transform:scaleX(0.88);transform-origin:center 50%;-webkit-text-stroke:0.1px #22ad45;">37,917.44</div>
<div class="t" style="top:383.93px;font-size:9.3px;line-height:9.3px;color:#333;left:280.50px;width:300px;text-align:center;transform:scaleX(0.88);transform-origin:center 50%;-webkit-text-stroke:0.1px #333;">241</div>
<div class="t" style="top:383.93px;font-size:9.3px;line-height:9.3px;color:#22ad45;left:330.20px;width:300px;text-align:center;transform:scaleX(0.88);transform-origin:center 50%;-webkit-text-stroke:0.1px #22ad45;">8,234.3</div>
<div class="t" style="top:383.93px;font-size:9.3px;line-height:9.3px;color:#22ad45;left:391.80px;width:300px;text-align:center;transform:scaleX(0.88);transform-origin:center 50%;-webkit-text-stroke:0.1px #22ad45;">44,699.69</div>
<div class="t" style="top:383.93px;font-size:9.3px;line-height:9.3px;color:#333;left:468.30px;width:300px;text-align:center;transform:scaleX(0.88);transform-origin:center 50%;-webkit-text-stroke:0.1px #333;">237 (98%)</div>
<div class="t" style="top:383.93px;font-size:9.3px;line-height:9.3px;color:#333;left:540.30px;width:300px;text-align:center;transform:scaleX(0.88);transform-origin:center 50%;-webkit-text-stroke:0.1px #333;">4 (2%)</div>
<div class="t" style="top:407.35px;font-size:8.8px;line-height:8.8px;color:#222;left:-119.60px;width:300px;text-align:center;transform:scaleX(0.84);transform-origin:center 50%;-webkit-text-stroke:0.12px #222;">EURUSD</div>
<div class="t" style="top:407.43px;font-size:9.3px;line-height:9.3px;color:#333;left:-65.80px;width:300px;text-align:center;transform:scaleX(0.88);transform-origin:center 50%;-webkit-text-stroke:0.1px #333;">0</div>
<div class="t" style="top:407.43px;font-size:9.3px;line-height:9.3px;color:#22ad45;left:-16.00px;width:300px;text-align:center;transform:scaleX(0.88);transform-origin:center 50%;-webkit-text-stroke:0.1px #22ad45;">0.0</div>
<div class="t" style="top:407.43px;font-size:9.3px;line-height:9.3px;color:#333;left:45.60px;width:300px;text-align:center;transform:scaleX(0.88);transform-origin:center 50%;-webkit-text-stroke:0.1px #333;">0.00</div>
<div class="t" style="top:407.43px;font-size:9.3px;line-height:9.3px;color:#333;left:107.70px;width:300px;text-align:center;transform:scaleX(0.88);transform-origin:center 50%;-webkit-text-stroke:0.1px #333;">251</div>
<div class="t" style="top:407.43px;font-size:9.3px;line-height:9.3px;color:#22ad45;left:157.40px;width:300px;text-align:center;transform:scaleX(0.88);transform-origin:center 50%;-webkit-text-stroke:0.1px #22ad45;">6,761.5</div>
<div class="t" style="top:407.43px;font-size:9.3px;line-height:9.3px;color:#22ad45;left:219.00px;width:300px;text-align:center;transform:scaleX(0.88);transform-origin:center 50%;-webkit-text-stroke:0.1px #22ad45;">40,922.41</div>
<div class="t" style="top:407.43px;font-size:9.3px;line-height:9.3px;color:#333;left:280.50px;width:300px;text-align:center;transform:scaleX(0.88);transform-origin:center 50%;-webkit-text-stroke:0.1px #333;">251</div>
<div class="t" style="top:407.43px;font-size:9.3px;line-height:9.3px;color:#22ad45;left:330.20px;width:300px;text-align:center;transform:scaleX(0.88);transform-origin:center 50%;-webkit-text-stroke:0.1px #22ad45;">6,761.5</div>
<div class="t" style="top:407.43px;font-size:9.3px;line-height:9.3px;color:#22ad45;left:391.80px;width:300px;text-align:center;transform:scaleX(0.88);transform-origin:center 50%;-webkit-text-stroke:0.1px #22ad45;">40,922.41</div>
<div class="t" style="top:407.43px;font-size:9.3px;line-height:9.3px;color:#333;left:468.30px;width:300px;text-align:center;transform:scaleX(0.88);transform-origin:center 50%;-webkit-text-stroke:0.1px #333;">250 (100%)</div>
<div class="t" style="top:407.43px;font-size:9.3px;line-height:9.3px;color:#333;left:540.30px;width:300px;text-align:center;transform:scaleX(0.88);transform-origin:center 50%;-webkit-text-stroke:0.1px #333;">1 (0%)</div>
<div class="t" style="top:430.85px;font-size:8.8px;line-height:8.8px;color:#222;left:-119.60px;width:300px;text-align:center;transform:scaleX(0.84);transform-origin:center 50%;-webkit-text-stroke:0.12px #222;">XAGUSD</div>
<div class="t" style="top:430.93px;font-size:9.3px;line-height:9.3px;color:#333;left:-65.80px;width:300px;text-align:center;transform:scaleX(0.88);transform-origin:center 50%;-webkit-text-stroke:0.1px #333;">0</div>
<div class="t" style="top:430.93px;font-size:9.3px;line-height:9.3px;color:#22ad45;left:-16.00px;width:300px;text-align:center;transform:scaleX(0.88);transform-origin:center 50%;-webkit-text-stroke:0.1px #22ad45;">0.0</div>
<div class="t" style="top:430.93px;font-size:9.3px;line-height:9.3px;color:#333;left:45.60px;width:300px;text-align:center;transform:scaleX(0.88);transform-origin:center 50%;-webkit-text-stroke:0.1px #333;">0.00</div>
<div class="t" style="top:430.93px;font-size:9.3px;line-height:9.3px;color:#333;left:107.70px;width:300px;text-align:center;transform:scaleX(0.88);transform-origin:center 50%;-webkit-text-stroke:0.1px #333;">160</div>
<div class="t" style="top:430.93px;font-size:9.3px;line-height:9.3px;color:#22ad45;left:157.40px;width:300px;text-align:center;transform:scaleX(0.88);transform-origin:center 50%;-webkit-text-stroke:0.1px #22ad45;">2,921.0</div>
<div class="t" style="top:430.93px;font-size:9.3px;line-height:9.3px;color:#22ad45;left:219.00px;width:300px;text-align:center;transform:scaleX(0.88);transform-origin:center 50%;-webkit-text-stroke:0.1px #22ad45;">66,224.32</div>
<div class="t" style="top:430.93px;font-size:9.3px;line-height:9.3px;color:#333;left:280.50px;width:300px;text-align:center;transform:scaleX(0.88);transform-origin:center 50%;-webkit-text-stroke:0.1px #333;">160</div>
<div class="t" style="top:430.93px;font-size:9.3px;line-height:9.3px;color:#22ad45;left:330.20px;width:300px;text-align:center;transform:scaleX(0.88);transform-origin:center 50%;-webkit-text-stroke:0.1px #22ad45;">2,921.0</div>
<div class="t" style="top:430.93px;font-size:9.3px;line-height:9.3px;color:#22ad45;left:391.80px;width:300px;text-align:center;transform:scaleX(0.88);transform-origin:center 50%;-webkit-text-stroke:0.1px #22ad45;">66,224.32</div>
<div class="t" style="top:430.93px;font-size:9.3px;line-height:9.3px;color:#333;left:468.30px;width:300px;text-align:center;transform:scaleX(0.88);transform-origin:center 50%;-webkit-text-stroke:0.1px #333;">160 (100%)</div>
<div class="t" style="top:430.93px;font-size:9.3px;line-height:9.3px;color:#333;left:540.30px;width:300px;text-align:center;transform:scaleX(0.88);transform-origin:center 50%;-webkit-text-stroke:0.1px #333;">0 (0%)</div>
<svg style="left:0;top:0" width="750" height="450" viewBox="0 0 750 450"><rect x="733" y="336" width="6.6" height="6.4" rx="1" fill="#2e2e2e"/><path d="M731 338.4 V343.6 Q731 344.4 731.8 344.4 H737.6" stroke="#2e2e2e" stroke-width="1.3" fill="none"/><path d="M737.6 438.1 H739.8" stroke="#2a2a2a" stroke-width="1.1" fill="none"/><path d="M738.2 432.2 L739.4 432.0 L739.3 434.4 Z" fill="#2a2a2a"/><path d="M731.3 360.6 V366.90000000000003 H739.8" stroke="#2a2a2a" stroke-width="1.2" fill="none"/><path d="M732.3 364.0 L733.9 362.8 L735.4 364.1 L738.0 362.20000000000005" stroke="#2a2a2a" stroke-width="1.1" fill="none"/><path d="M736.6 361.20000000000005 L739.2 361.0 L739.0 363.6 Z" fill="#2a2a2a"/><path d="M731.3 384.4 V390.7 H739.8" stroke="#2a2a2a" stroke-width="1.2" fill="none"/><path d="M732.3 387.79999999999995 L733.9 386.59999999999997 L735.4 387.9 L738.0 386.0" stroke="#2a2a2a" stroke-width="1.1" fill="none"/><path d="M736.6 385.0 L739.2 384.79999999999995 L739.0 387.4 Z" fill="#2a2a2a"/><path d="M731.3 408.2 V414.5 H739.8" stroke="#2a2a2a" stroke-width="1.2" fill="none"/><path d="M732.3 411.59999999999997 L733.9 410.4 L735.4 411.7 L738.0 409.8" stroke="#2a2a2a" stroke-width="1.1" fill="none"/><path d="M736.6 408.8 L739.2 408.59999999999997 L739.0 411.2 Z" fill="#2a2a2a"/><g stroke="#fff" fill="none" stroke-linecap="round"><circle cx="719.6" cy="420.8" r="8.3" stroke-width="7.6"/><line x1="726.3" y1="427.5" x2="735.3" y2="436.3" stroke-width="7.6"/></g><circle cx="719.6" cy="420.8" r="8.3" fill="#fff" stroke="#3b3b3b" stroke-width="4.1"/><line x1="726.6" y1="427.8" x2="735.1" y2="436.1" stroke="#3b3b3b" stroke-width="3.8" stroke-linecap="round"/><path d="M719.6 416.0 V425.6 M714.8 420.8 H724.4" stroke="#3b3b3b" stroke-width="2.7"/></svg>
</body></html>
